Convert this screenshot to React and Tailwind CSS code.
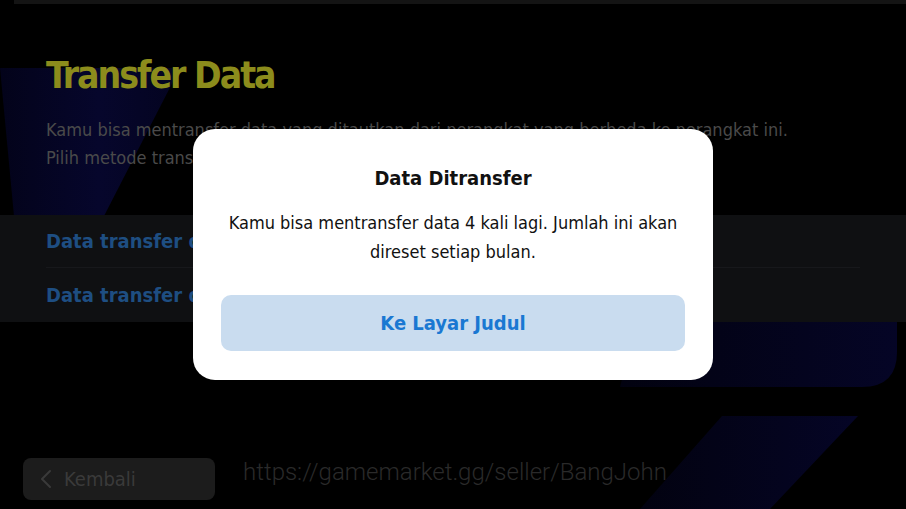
import React from "react";
import { ChevronLeft } from "lucide-react";

const din = { fontFamily: "'DejaVu Sans Condensed', 'DejaVu Sans', sans-serif" };

// slanted navy shapes behind the page content
const Backdrop = () => (
  <svg className="absolute inset-0 w-full h-full" viewBox="0 0 906 509" preserveAspectRatio="none">
    <defs>
      <linearGradient id="navyA" x1="0" y1="0" x2="1" y2="0">
        <stop offset="0" stopColor="#03031a" />
        <stop offset="0.55" stopColor="#06062c" />
        <stop offset="1" stopColor="#040420" />
      </linearGradient>
      <linearGradient id="navyB" x1="0" y1="0" x2="1" y2="0">
        <stop offset="0" stopColor="#020210" />
        <stop offset="1" stopColor="#050526" />
      </linearGradient>
    </defs>
    <polygon points="0,68 180,68 104,216 14,216" fill="url(#navyA)" />
    <path d="M640,310 L897,310 L897,352 Q897,387 862,387 L620,387 Z" fill="url(#navyB)" />
    <polygon points="722,416 858,416 770,509 640,509" fill="url(#navyB)" />
  </svg>
);

export default function App() {
  return (
    <div className="relative w-[906px] h-[509px] bg-black overflow-hidden" style={din}>
      <Backdrop />
      <div className="absolute top-0 left-[14px] right-0 h-[4px] bg-[#141414]" />

      <div className="relative flex flex-col h-full pt-[54px]">
        <h1 className="px-[46px] text-[37px] leading-[44px] font-bold text-[#8c8c1c] tracking-[-2px]">
          Transfer Data
        </h1>
        <div className="px-[46px] mt-[18px] text-[18px] leading-[28px] text-[#4a4a4a]">
          <p>Kamu bisa mentransfer data yang ditautkan dari perangkat yang berbeda ke perangkat ini.</p>
          <p>Pilih metode transfer data.</p>
        </div>

        <div className="mt-[43px] bg-[#0f1012] px-[46px]">
          <div className="h-[53px] flex items-center border-b border-[#17181b] text-[20px] font-bold text-[#1e4e82]">
            Data transfer dari perangkat lain
          </div>
          <div className="h-[54px] flex items-center text-[20px] font-bold text-[#1e4e82]">
            Data transfer dengan kode
          </div>
        </div>

        <div className="mt-auto mb-[9px] px-[23px] flex items-start gap-[28px]">
          <button className="w-[192px] h-[42px] rounded-[8px] bg-[#1c1c1c] flex items-center gap-[2px] pl-[7px] text-[20px] text-[#3a3a3a]">
            <ChevronLeft size={32} strokeWidth={1.5} className="text-[#3a3a3a]" />
            Kembali
          </button>
          <span className="-mt-[2px] text-[24px] leading-[32px] text-[#2a2a2a] font-light" style={{ fontFamily: "Roboto, sans-serif" }}>
            https://gamemarket.gg/seller/BangJohn
          </span>
        </div>
      </div>

      {/* dialog */}
      <div className="absolute inset-0 flex items-center justify-center">
        <div className="w-[520px] h-[251px] bg-white rounded-[22px] flex flex-col items-center px-[28px] pt-[36px]">
          <h2 className="text-[20px] leading-[26px] font-bold text-[#111]">Data Ditransfer</h2>
          <p className="mt-[17px] text-center text-[18px] leading-[29px] text-[#111]">
            Kamu bisa mentransfer data 4 kali lagi. Jumlah ini akan
            <br />
            direset setiap bulan.
          </p>
          <button className="mt-[29px] w-full h-[56px] rounded-[10px] bg-[#c9dcef] text-[20px] font-bold text-[#1a78d2]">
            Ke Layar Judul
          </button>
        </div>
      </div>
    </div>
  );
}
